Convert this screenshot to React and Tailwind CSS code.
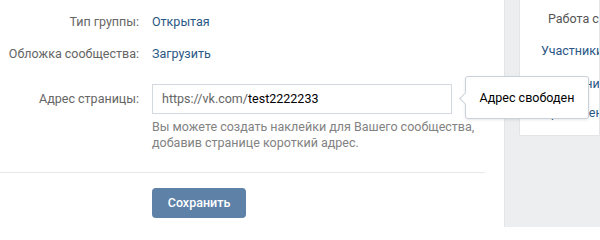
import React from "react";

const font = { fontFamily: "Roboto, 'Open Sans', Arial, sans-serif" };

function Row({ label, children, className = "" }) {
  return (
    <div className={`flex items-center ${className}`}>
      <div className="w-[139px] shrink-0 text-right text-[#656565]">{label}</div>
      <div className="ml-[13px]">{children}</div>
    </div>
  );
}

export default function App() {
  return (
    <div
      className="relative flex h-[227px] w-[600px] overflow-hidden bg-[#edeef0] text-[12.5px] leading-4"
      style={font}
    >
      {/* main settings card */}
      <div className="w-[505px] shrink-0 border-r border-[#e3e4e8] bg-white pt-[14px]">
        <Row label="Тип группы:">
          <span className="text-[#2a5885]">Открытая</span>
        </Row>
        <Row label="Обложка сообщества:" className="mt-4">
          <span className="text-[#2a5885]">Загрузить</span>
        </Row>
        <Row label="Адрес страницы:" className="mt-[22px]">
          <div className="flex h-[30px] w-[300px] items-center border border-[#d3d9de] px-[9px]">
            <span className="text-[#656565]">https://vk.com/</span>
            <span className="text-black">test2222233</span>
          </div>
        </Row>
        <p className="ml-[152px] mt-[5px] text-[#828282]">
          Вы можете создать наклейки для Вашего сообщества,
          <br />
          добавив странице короткий адрес.
        </p>
        <div className="mt-[21px] h-px w-[485px] bg-[#e7e8ec]" />
        <button className="ml-[152px] mt-[15px] flex h-[30px] w-[94px] items-center justify-center rounded-[4px] bg-[#5e81a8] text-[12.5px] font-medium text-white">
          Сохранить
        </button>
      </div>

      {/* right menu */}
      <div className="ml-[14px] h-[136px] flex-1 overflow-hidden whitespace-nowrap rounded-b-[2px] border border-t-0 border-[#e3e4e8] bg-white">
        <div className="pl-[28px] pt-[11px] text-[#555]">Работа с API</div>
        <div className="mt-4 pl-[21px] text-[#2a5885]">Участники</div>
        <div className="mt-[17px] pl-[19px] text-[#2a5885]">Сообщения</div>
        <div className="mt-[13px] pl-[22px] text-[#2a5885]">Приложения</div>
      </div>

      {/* tooltip */}
      <div className="absolute left-[465px] top-[76px] z-10 flex h-[43px] w-[124px] items-center justify-center rounded-[3px] border border-[#c9d1da] bg-white text-black shadow-[0_1px_3px_rgba(0,0,0,0.1)]">
        <span className="absolute -left-[5px] top-[17px] h-[9px] w-[9px] rotate-45 border-b border-l border-[#c9d1da] bg-white" />
        Адрес свободен
      </div>
    </div>
  );
}
